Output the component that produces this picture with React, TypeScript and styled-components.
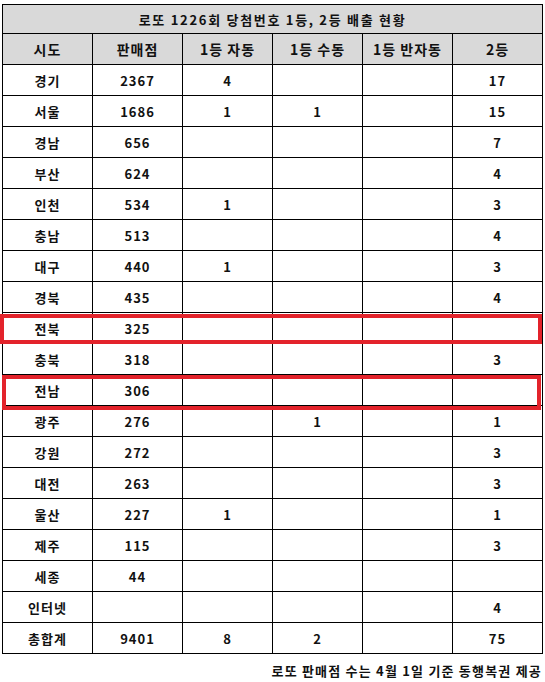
import React from "react";
import styled, {createGlobalStyle} from "styled-components";

const GlobalStyle = createGlobalStyle`
  html, body {
    margin: 0;
    padding: 0;
    background: #fff;
  }
  body {
    font-family: "Noto Sans CJK KR", "Noto Sans", sans-serif;
    color: #111;
  }
`;

const Page = styled.div`
  position: relative;
  width: 545px;
  padding: 4px 0 0 2px;
  box-sizing: border-box;
`;

const Table = styled.table`
  width: 540px;
  table-layout: fixed;
  border-collapse: collapse;
  font-weight: 700;
  letter-spacing: 1px;
`;

const TitleCell = styled.th`
  height: 28px;
  padding: 0;
  background: #d9d9d9;
  border: 1px solid #000;
  font-size: 13px;
  font-weight: 700;
  letter-spacing: 1.7px;
  text-align: center;
`;

const HeadCell = styled.th`
  height: 30px;
  padding: 0;
  background: #d9d9d9;
  border: 1px solid #000;
  font-size: 14px;
  font-weight: 700;
  text-align: center;
`;

const Cell = styled.td`
  height: 30px;
  padding: 0;
  border: 1px solid #000;
  font-size: 13px;
  text-align: center;
`;

const Highlight = styled.div<{$top: number; $left: number; $width: number; $height: number}>`
  position: absolute;
  top: ${(p) => p.$top}px;
  left: ${(p) => p.$left}px;
  width: ${(p) => p.$width}px;
  height: ${(p) => p.$height}px;
  border: 4px solid #e3232b;
  box-sizing: border-box;
  pointer-events: none;
`;

const Source = styled.div`
  margin-top: 7px;
  padding-right: 3px;
  text-align: right;
  font-size: 13px;
  font-weight: 700;
  letter-spacing: 1.2px;
`;

const columns = ["시도", "판매점", "1등 자동", "1등 수동", "1등 반자동", "2등"];

const rows: (string | number)[][] = [
  ["경기", 2367, 4, "", "", 17],
  ["서울", 1686, 1, 1, "", 15],
  ["경남", 656, "", "", "", 7],
  ["부산", 624, "", "", "", 4],
  ["인천", 534, 1, "", "", 3],
  ["충남", 513, "", "", "", 4],
  ["대구", 440, 1, "", "", 3],
  ["경북", 435, "", "", "", 4],
  ["전북", 325, "", "", "", ""],
  ["충북", 318, "", "", "", 3],
  ["전남", 306, "", "", "", ""],
  ["광주", 276, "", 1, "", 1],
  ["강원", 272, "", "", "", 3],
  ["대전", 263, "", "", "", 3],
  ["울산", 227, 1, "", "", 1],
  ["제주", 115, "", "", "", 3],
  ["세종", 44, "", "", "", ""],
  ["인터넷", "", "", "", "", 4],
  ["총합계", 9401, 8, 2, "", 75],
];

export default function App() {
  return (
    <Page>
      <GlobalStyle />
      <Table>
        <colgroup>
          {columns.map((c) => (
            <col key={c} style={{width: 90}} />
          ))}
        </colgroup>
        <thead>
          <tr>
            <TitleCell colSpan={6}>로또 1226회 당첨번호 1등, 2등 배출 현황</TitleCell>
          </tr>
          <tr>
            {columns.map((c) => (
              <HeadCell key={c}>{c}</HeadCell>
            ))}
          </tr>
        </thead>
        <tbody>
          {rows.map((row) => (
            <tr key={row[0]}>
              {row.map((value, i) => (
                <Cell key={i}>{value}</Cell>
              ))}
            </tr>
          ))}
        </tbody>
      </Table>
      <Source>로또 판매점 수는 4월 1일 기준 동행복권 제공</Source>
      <Highlight $top={314} $left={0} $width={542} $height={30} />
      <Highlight $top={375} $left={2} $width={539} $height={35} />
    </Page>
  );
}
